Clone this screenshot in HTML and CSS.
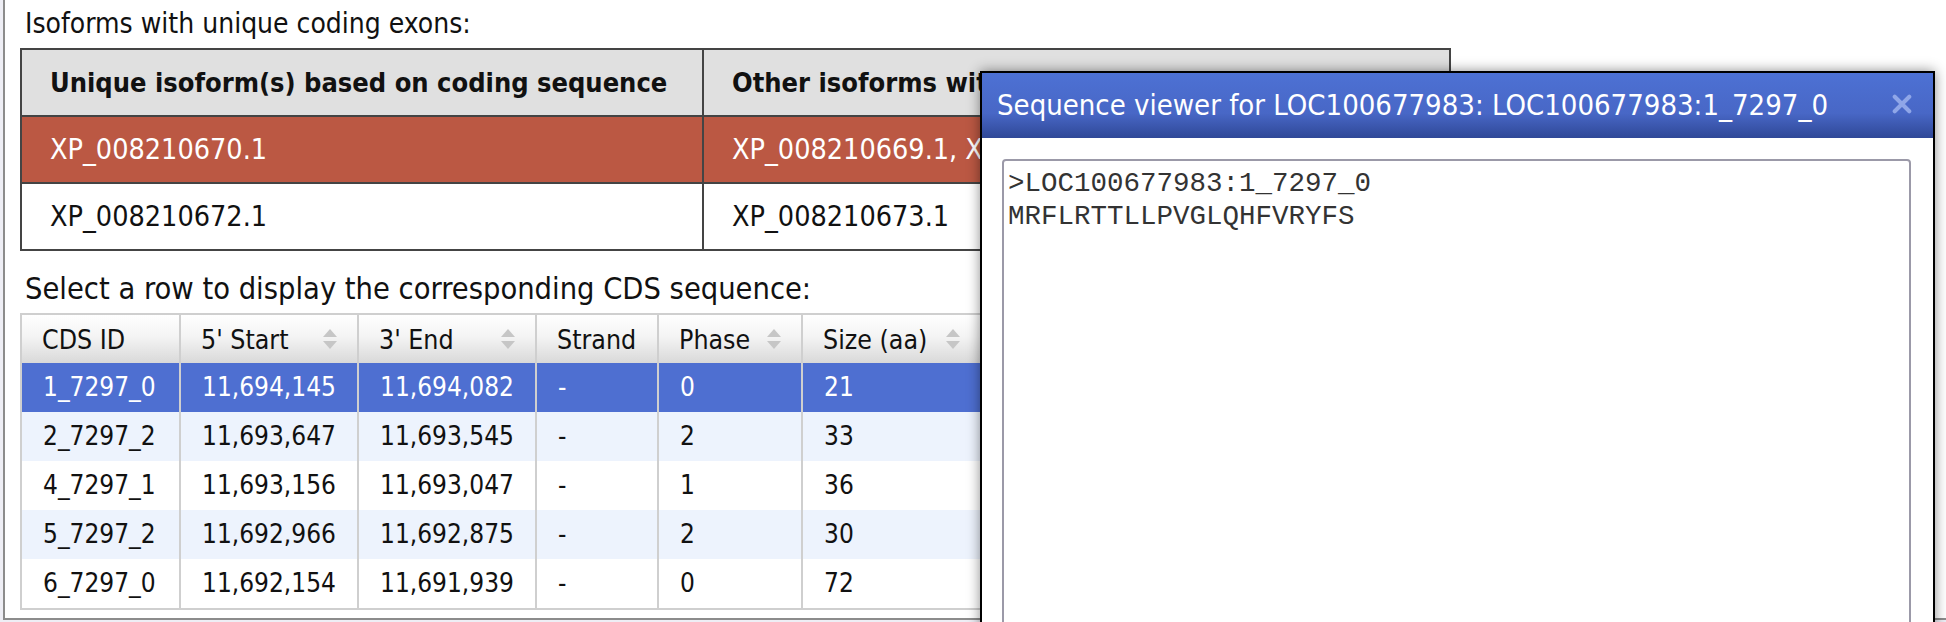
FILE: index.html
```html
<!DOCTYPE html>
<html>
  <head>
    <title>Isoforms and CDS sequence viewer</title>
    <link rel="stylesheet" href="styles.css">
  </head>
  <body>
    <div class="page">
      <div class="section-label">Isoforms with unique coding exons:</div>
      <table class="isoforms">
        <tr>
          <th class="col-unique">Unique isoform(s) based on coding sequence</th>
          <th>Other isoforms with identical coding sequence</th>
        </tr>
        <tr class="highlight">
          <td>XP_008210670.1</td>
          <td>XP_008210669.1, XP_008210671.1</td>
        </tr>
        <tr>
          <td>XP_008210672.1</td>
          <td>XP_008210673.1</td>
        </tr>
      </table>

      <div class="section-label big">Select a row to display the corresponding CDS sequence:</div>
      <table class="cds">
        <colgroup>
          <col class="w-id">
          <col class="w-pos">
          <col class="w-pos">
          <col class="w-strand">
          <col class="w-phase">
          <col class="w-size">
        </colgroup>
        <tr>
          <th><div class="th-inner"><span>CDS ID</span></div></th>
          <th><div class="th-inner"><span>5' Start</span><svg class="sort" viewBox="0 0 14 20"><path d="M7 0 L14 8 L0 8 Z"/><path d="M0 12 L14 12 L7 20 Z"/></svg></div></th>
          <th><div class="th-inner"><span>3' End</span><svg class="sort" viewBox="0 0 14 20"><path d="M7 0 L14 8 L0 8 Z"/><path d="M0 12 L14 12 L7 20 Z"/></svg></div></th>
          <th><div class="th-inner"><span>Strand</span></div></th>
          <th><div class="th-inner"><span>Phase</span><svg class="sort" viewBox="0 0 14 20"><path d="M7 0 L14 8 L0 8 Z"/><path d="M0 12 L14 12 L7 20 Z"/></svg></div></th>
          <th><div class="th-inner"><span>Size (aa)</span><svg class="sort" viewBox="0 0 14 20"><path d="M7 0 L14 8 L0 8 Z"/><path d="M0 12 L14 12 L7 20 Z"/></svg></div></th>
        </tr>
        <tr class="selected">
          <td>1_7297_0</td><td>11,694,145</td><td>11,694,082</td><td>-</td><td>0</td><td>21</td>
        </tr>
        <tr class="odd">
          <td>2_7297_2</td><td>11,693,647</td><td>11,693,545</td><td>-</td><td>2</td><td>33</td>
        </tr>
        <tr>
          <td>4_7297_1</td><td>11,693,156</td><td>11,693,047</td><td>-</td><td>1</td><td>36</td>
        </tr>
        <tr class="odd">
          <td>5_7297_2</td><td>11,692,966</td><td>11,692,875</td><td>-</td><td>2</td><td>30</td>
        </tr>
        <tr>
          <td>6_7297_0</td><td>11,692,154</td><td>11,691,939</td><td>-</td><td>0</td><td>72</td>
        </tr>
      </table>
    </div>

    <div class="dialog">
      <div class="dialog-header">
        <span class="dialog-title">Sequence viewer for LOC100677983: LOC100677983:1_7297_0</span>
        <svg class="dialog-close" viewBox="0 0 22 22"><path d="M3 3 L19 19 M19 3 L3 19"/></svg>
      </div>
      <div class="dialog-body">
        <textarea class="sequence" readonly>&gt;LOC100677983:1_7297_0
MRFLRTTLLPVGLQHFVRYFS</textarea>
      </div>
    </div>
  </body>
</html>
```

FILE: styles.css
```css
body {
  margin: 0;
  height: 622px;
  overflow: hidden;
  background: #eeeef5;
  font-family: 'DejaVu Sans Condensed', 'DejaVu Sans', sans-serif;
  font-stretch: condensed;
  color: #111;
}
.page {
  margin-left: 3px;
  padding: 8px 0 8px 15px;
  background: white;
  border-left: 2px solid #8c8c8c;
  border-bottom: 2px solid #8c8c8c;
}
.section-label {
  font-size: 28px;
  line-height: 32px;
  padding-left: 5px;
  margin-bottom: 8px;
}
.section-label.big {
  font-size: 30.5px;
  margin-top: 22px;
}
.isoforms {
  border-collapse: collapse;
  width: 1431px;
  font-size: 28.5px;
}
.isoforms th,
.isoforms td {
  border: 2px solid #444;
  text-align: left;
  padding: 16px 28px;
  line-height: 33px;
  white-space: nowrap;
  overflow: hidden;
}
.isoforms th {
  background: #e0e0e0;
  font-weight: bold;
  font-size: 27px;
}
.isoforms .col-unique {
  width: 624px;
}
.isoforms tr.highlight td {
  background: #bb5843;
  color: white;
}
.cds {
  border-collapse: collapse;
  table-layout: fixed;
  width: 960px;
  font-size: 26px;
  color: #111;
}
.w-id { width: 159px; }
.w-pos { width: 178px; }
.w-strand { width: 122px; }
.w-phase { width: 144px; }
.w-size { width: 179px; }
.cds th,
.cds td {
  border-left: 2px solid #cfcfcf;
  border-right: 2px solid #cfcfcf;
  text-align: left;
  white-space: nowrap;
}
.cds th {
  border-top: 2px solid #cfcfcf;
  font-weight: normal;
  font-size: 26.5px;
  height: 48px;
  padding: 0 20px;
  background: linear-gradient(#ffffff 0%, #f4f4f4 45%, #d9d9d9 100%);
}
.th-inner {
  display: flex;
  justify-content: space-between;
  align-items: center;
}
.sort {
  width: 14px;
  height: 20px;
  fill: #c6c6c6;
  flex: none;
}
.cds td {
  height: 49px;
  padding: 0 21px;
  line-height: 49px;
}
.cds tr:last-child td {
  border-bottom: 2px solid #cfcfcf;
}
.cds tr.odd td {
  background: #edf3fd;
}
.cds tr.selected td {
  background: #4e6fd1;
  color: white;
}
.dialog {
  position: absolute;
  left: 980px;
  top: 71px;
  width: 951px;
  height: 560px;
  background: white;
  border: 2px solid #000;
  box-shadow: 0 0 12px rgba(0, 0, 0, 0.45);
}
.dialog-header {
  height: 65px;
  display: flex;
  align-items: center;
  justify-content: space-between;
  padding: 0 21px 0 15px;
  background: linear-gradient(#4d71d4 0%, #4867c6 62%, #2f4897 100%);
}
.dialog-title {
  color: white;
  font-size: 29px;
  padding-bottom: 2px;
  white-space: nowrap;
}
.dialog-close {
  width: 20px;
  height: 20px;
  margin-bottom: 4px;
  stroke: #8fa6e8;
  stroke-width: 4.5;
  stroke-linecap: round;
  fill: none;
}
.dialog-body {
  padding: 21px 20px 0 20px;
}
.sequence {
  display: block;
  box-sizing: border-box;
  width: 909px;
  height: 500px;
  margin: 0;
  padding: 6px 4px;
  border: 2px solid #9b99a8;
  border-radius: 4px;
  font-family: 'Liberation Mono', 'Courier New', monospace;
  font-size: 27.5px;
  line-height: 33px;
  color: #333;
  resize: none;
  overflow: hidden;
}
```
